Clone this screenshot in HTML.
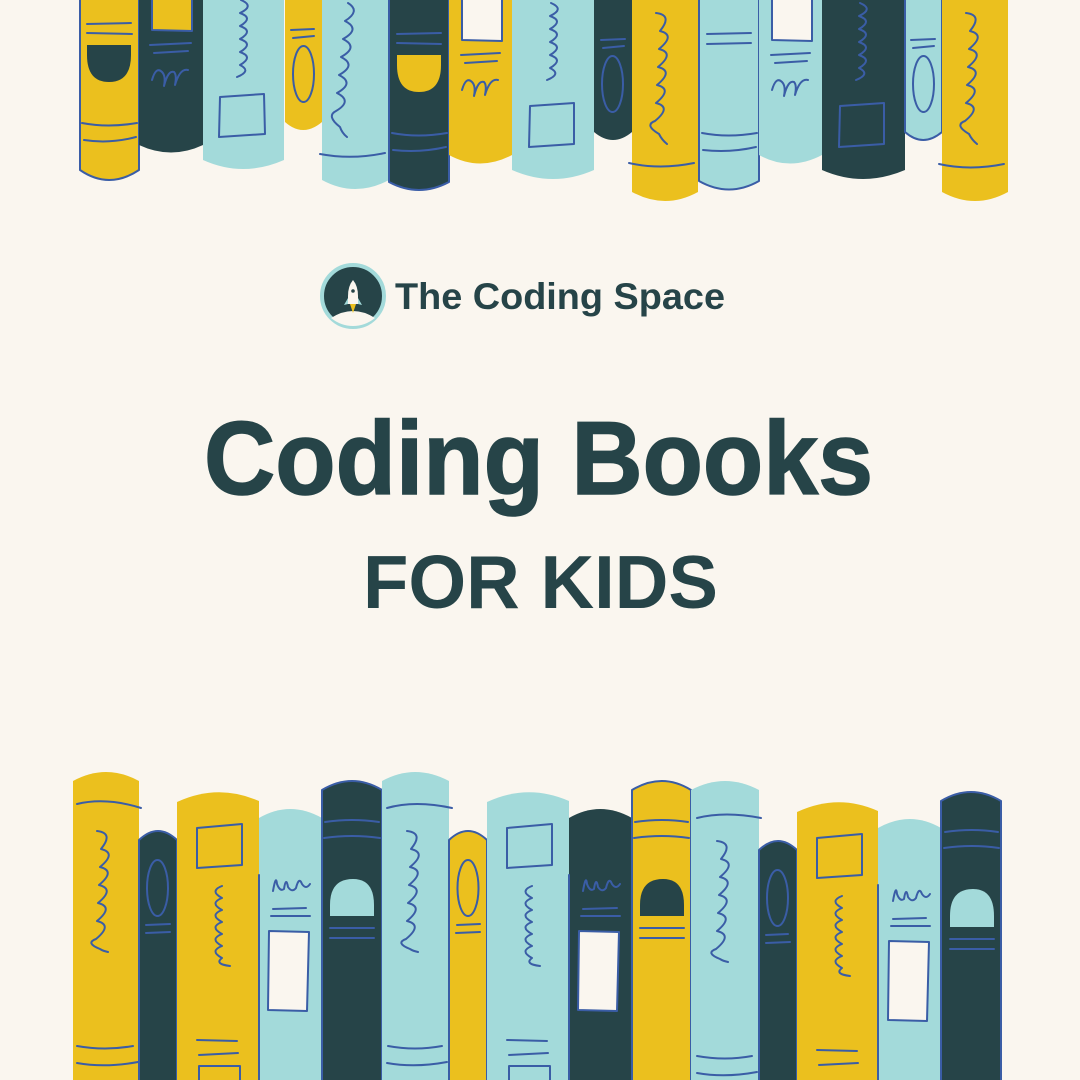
<!DOCTYPE html>
<html><head><meta charset="utf-8"><style>
html,body{margin:0;padding:0;background:#FAF6EF;}
svg{display:block}
</style></head><body>
<svg width="1080" height="1080" viewBox="0 0 1080 1080" xmlns="http://www.w3.org/2000/svg">
<rect width="1080" height="1080" fill="#FAF6EF"/>
<g stroke="#3A5DA6" stroke-width="2" fill="none" stroke-linecap="round" stroke-linejoin="round">
<path d="M80,-5 V170 Q109,190 139,170 V-5 Z" fill="#EBC01E"/>
<path d="M87,24 L131,23 M87,33 L132,34"/>
<path d="M87,45 H131 V55 Q131,82 109,82 Q87,82 87,55 Z" fill="#264448" stroke="none"/>
<path d="M82,123 Q108,128 137,123 M84,140 Q110,144 136,137"/>
<path d="M139,-5 V145 Q171,160 203,145 V-5 Z" fill="#264448" stroke="none"/>
<path d="M152,-5 V30 L192,31 V-5 Z" fill="#EBC01E"/>
<path d="M150,45 L191,43 M154,53 L188,51"/>
<path d="M152,80 Q156,66 162,72 Q166,76 164,86 Q168,70 174,72 Q177,75 175,85 Q180,68 188,70"/>
<path d="M203,-5 V160 Q243,178 284,160 V-5 Z" fill="#A3DADA" stroke="none"/>
<path d="M241,0 q14,6 -1,13 q14,5 0,13 q14,5 0,13 q14,5 0,13 q14,5 0,13 q12,6 -3,12"/>
<path d="M220,97 L264,94 L265,134 L219,137 Z"/>
<path d="M285,-5 V122 Q303,138 322,122 V-5 Z" fill="#EBC01E" stroke="none"/>
<path d="M291,30 L314,29 M293,38 L314,36"/>
<ellipse cx="303.5" cy="74" rx="10.5" ry="28"/>
<path d="M322,-5 V180 Q355,198 389,180 V-5 Z" fill="#A3DADA" stroke="none"/>
<path d="M348,3 q13,8 -3,18 q16,8 -2,18 q16,8 -2,18 q16,8 -2,18 q16,8 -2,18 q16,8 -1,18 q-10,5 4,16 q2,6 7,10"/>
<path d="M320,154 Q352,160 385,153"/>
<path d="M389,-5 V182 Q419,198 449,182 V-5 Z" fill="#264448"/>
<path d="M397,34 L441,33 M397,43 L441,44"/>
<path d="M397,55 H441 V65 Q441,92 419,92 Q397,92 397,65 Z" fill="#EBC01E" stroke="none"/>
<path d="M392,133 Q418,138 447,133 M393,150 Q420,153 446,147"/>
<path d="M449,-5 V155 Q480,172 512,155 V-5 Z" fill="#EBC01E" stroke="none"/>
<path d="M462,-5 V40 L502,41 V-5 Z" fill="#FAF6EF"/>
<path d="M461,55 L500,53 M465,63 L497,61"/>
<path d="M462,90 Q466,76 472,82 Q476,86 474,96 Q478,80 484,82 Q487,85 485,95 Q490,78 498,80"/>
<path d="M512,-5 V170 Q553,188 594,170 V-5 Z" fill="#A3DADA" stroke="none"/>
<path d="M551,3 q14,6 -1,13 q14,5 0,13 q14,5 0,13 q14,5 0,13 q14,5 0,13 q12,6 -3,12"/>
<path d="M530,106 L574,103 L574,144 L529,147 Z"/>
<path d="M594,-5 V132 Q613,148 632,132 V-5 Z" fill="#264448" stroke="none"/>
<path d="M601,40 L625,39 M603,48 L624,46"/>
<ellipse cx="612.5" cy="84" rx="10.5" ry="28"/>
<path d="M632,-5 V192 Q665,210 698,192 V-5 Z" fill="#EBC01E" stroke="none"/>
<path d="M656,13 q17,2 4,18 q16,4 -1,18 q16,4 -1,18 q16,4 -1,18 q16,4 -1,18 q16,4 -1,18 q-11,4 4,13 q3,6 8,10"/>
<path d="M629,163 Q660,170 694,163"/>
<path d="M699,-5 V181 Q729,198 759,181 V-5 Z" fill="#A3DADA"/>
<path d="M707,34 L751,33 M707,44 L751,43"/>
<path d="M702,133 Q728,138 757,133 M703,150 Q730,153 756,147"/>
<path d="M759,-5 V155 Q790,172 822,155 V-5 Z" fill="#A3DADA" stroke="none"/>
<path d="M772,-5 V40 L812,41 V-5 Z" fill="#FAF6EF"/>
<path d="M771,55 L810,53 M775,63 L807,61"/>
<path d="M772,90 Q776,76 782,82 Q786,86 784,96 Q788,80 794,82 Q797,85 795,95 Q800,78 808,80"/>
<path d="M822,-5 V170 Q863,188 905,170 V-5 Z" fill="#264448" stroke="none"/>
<path d="M860,3 q14,6 -1,13 q14,5 0,13 q14,5 0,13 q14,5 0,13 q14,5 0,13 q12,6 -3,12"/>
<path d="M840,106 L884,103 L884,144 L839,147 Z"/>
<path d="M905,-5 V132 Q923,148 942,132 V-5 Z" fill="#A3DADA"/>
<path d="M911,40 L935,39 M913,48 L934,46"/>
<ellipse cx="923.5" cy="84" rx="10.5" ry="28"/>
<path d="M942,-5 V192 Q975,210 1008,192 V-5 Z" fill="#EBC01E" stroke="none"/>
<path d="M966,13 q17,2 4,18 q16,4 -1,18 q16,4 -1,18 q16,4 -1,18 q16,4 -1,18 q16,4 -1,18 q-11,4 4,13 q3,6 8,10"/>
<path d="M939,164 Q970,171 1004,164"/>

<path d="M73,1085 V781 Q106,763 139,781 V1085 Z" fill="#EBC01E" stroke="none"/>
<path d="M77,804 Q106,797 141,808"/>
<path d="M97,831 q17,2 4,18 q16,4 -1,18 q16,4 -1,18 q16,4 -1,18 q16,4 -1,18 q16,4 -1,18 q-11,4 4,10 q3,2 8,3"/>
<path d="M77,1046 Q105,1051 133,1046 M77,1063 Q105,1068 138,1062"/>
<path d="M139,1085 V840 Q158,822 177,840 V1085 Z" fill="#264448"/>
<ellipse cx="157.5" cy="888" rx="10.5" ry="28"/>
<path d="M146,925 L170,924 M146,933 L170,932"/>
<path d="M177,1085 V802 Q218,783 259,801 V1085 Z" fill="#EBC01E" stroke="none"/>
<path d="M197,828 L242,824 L242,865 L197,868 Z"/>
<path d="M222,886 q-13,5 0,12 q-13,5 0,12 q-13,5 0,12 q-13,5 0,12 q-13,5 0,12 q-13,5 0,12 q-8,6 8,8"/>
<path d="M197,1040 L237,1041 M199,1055 L238,1053 M199,1080 V1066 L240,1066 V1080"/>
<path d="M259,1085 V818 Q290,800 322,818 V1085 Z" fill="#A3DADA" stroke="none"/>
<path d="M273,891 Q276,874 277,884 Q280,892 284,889 Q286,876 288,887 Q292,893 296,888 Q299,876 302,884 Q306,890 310,884"/>
<path d="M273,909 L306,908 M271,916 L310,916"/>
<path d="M269,931 L309,932 L307,1011 L268,1010 Z" fill="#FAF6EF"/>
<path d="M259,1085 V875 M322,1085 V875" />
<path d="M322,1085 V790 Q352,772 382,790 V1085 Z" fill="#264448"/>
<path d="M325,822 Q352,818 379,822 M324,838 Q352,834 380,838"/>
<path d="M330,916 V905 Q330,879 353,879 Q374,879 374,905 V916 Z" fill="#A3DADA" stroke="none"/>
<path d="M330,928 L374,928 M330,938 L374,938"/>
<path d="M382,1085 V781 Q415,763 449,781 V1085 Z" fill="#A3DADA" stroke="none"/>
<path d="M387,808 Q415,800 452,808"/>
<path d="M407,831 q17,2 4,18 q16,4 -1,18 q16,4 -1,18 q16,4 -1,18 q16,4 -1,18 q16,4 -1,18 q-11,4 4,10 q3,2 8,3"/>
<path d="M388,1046 Q415,1051 442,1046 M387,1063 Q415,1068 447,1062"/>
<path d="M449,1085 V840 Q468,822 487,840 V1085 Z" fill="#EBC01E"/>
<ellipse cx="468" cy="888" rx="10.5" ry="28"/>
<path d="M457,925 L480,924 M456,933 L480,932"/>
<path d="M487,1085 V802 Q528,783 569,801 V1085 Z" fill="#A3DADA" stroke="none"/>
<path d="M507,828 L552,824 L552,865 L507,868 Z"/>
<path d="M532,886 q-13,5 0,12 q-13,5 0,12 q-13,5 0,12 q-13,5 0,12 q-13,5 0,12 q-13,5 0,12 q-8,6 8,8"/>
<path d="M507,1040 L547,1041 M509,1055 L548,1053 M509,1080 V1066 L550,1066 V1080"/>
<path d="M569,1085 V818 Q600,800 632,818 V1085 Z" fill="#264448" stroke="none"/>
<path d="M583,891 Q586,874 587,884 Q590,892 594,889 Q596,876 598,887 Q602,893 606,888 Q609,876 612,884 Q616,890 620,884"/>
<path d="M583,909 L617,908 M581,916 L620,916"/>
<path d="M579,931 L619,932 L617,1011 L578,1010 Z" fill="#FAF6EF"/>
<path d="M569,1085 V875"/>
<path d="M632,1085 V790 Q662,772 691,790 V1085 Z" fill="#EBC01E"/>
<path d="M635,822 Q662,818 688,822 M634,838 Q662,834 689,838"/>
<path d="M640,916 V905 Q640,879 663,879 Q684,879 684,905 V916 Z" fill="#264448" stroke="none"/>
<path d="M640,928 L684,928 M640,938 L684,938"/>
<path d="M691,1085 V790 Q725,772 759,790 V1085 Z" fill="#A3DADA" stroke="none"/>
<path d="M697,818 Q725,811 761,818"/>
<path d="M717,841 q17,2 4,18 q16,4 -1,18 q16,4 -1,18 q16,4 -1,18 q16,4 -1,18 q16,4 -1,18 q-11,4 4,10 q3,2 8,3"/>
<path d="M697,1056 Q725,1061 752,1056 M697,1073 Q725,1078 757,1072"/>
<path d="M759,1085 V850 Q778,832 797,850 V1085 Z" fill="#264448"/>
<ellipse cx="777.5" cy="898" rx="10.5" ry="28"/>
<path d="M766,935 L788,934 M766,943 L790,942"/>
<path d="M797,1085 V812 Q838,793 878,811 V1085 Z" fill="#EBC01E" stroke="none"/>
<path d="M817,838 L862,834 L862,875 L817,878 Z"/>
<path d="M842,896 q-13,5 0,12 q-13,5 0,12 q-13,5 0,12 q-13,5 0,12 q-13,5 0,12 q-13,5 0,12 q-8,6 8,8"/>
<path d="M817,1050 L857,1051 M819,1065 L858,1063"/>
<path d="M878,1085 V828 Q910,810 941,828 V1085 Z" fill="#A3DADA" stroke="none"/>
<path d="M893,901 Q896,884 897,894 Q900,902 904,899 Q906,886 908,897 Q912,903 916,898 Q919,886 922,894 Q926,900 930,894"/>
<path d="M893,919 L926,918 M891,926 L930,926"/>
<path d="M889,941 L929,942 L927,1021 L888,1020 Z" fill="#FAF6EF"/>
<path d="M878,1085 V885"/>
<path d="M941,1085 V801 Q971,783 1001,801 V1085 Z" fill="#264448"/>
<path d="M945,832 Q972,828 998,832 M944,848 Q972,844 999,848"/>
<path d="M950,927 V916 Q950,889 973,889 Q994,889 994,916 V927 Z" fill="#A3DADA" stroke="none"/>
<path d="M950,939 L994,939 M950,949 L994,949"/>
</g>

<circle cx="353" cy="296" r="31" fill="#264448" stroke="#A3DADA" stroke-width="4"/>
<path d="M331,318 Q353,304 375,318 Q365,326 353,326 Q341,326 331,318 Z" fill="#FAF6EF"/>
<path d="M353,280 Q358,286 358,296 V304 H348 V296 Q348,286 353,280 Z" fill="#FAF6EF"/>
<path d="M348,298 L344,305 L348,304 Z M358,298 L362,305 L358,304 Z" fill="#A3DADA"/>
<path d="M350,304 L353,313 L356,304 Z" fill="#EBC01E"/>
<circle cx="353" cy="291" r="1.8" fill="#264448"/>

<g fill="#264448" font-family="'Liberation Sans', Arial, sans-serif" font-weight="bold">
<text x="395" y="309" font-size="37" textLength="330" lengthAdjust="spacingAndGlyphs">The Coding Space</text>
<text x="204" y="494" font-size="104" textLength="669" lengthAdjust="spacingAndGlyphs" stroke="#264448" stroke-width="1.5">Coding Books</text>
<text x="363" y="608" font-size="75" textLength="355" lengthAdjust="spacingAndGlyphs">FOR KIDS</text>
</g>
</svg>
</body></html>
